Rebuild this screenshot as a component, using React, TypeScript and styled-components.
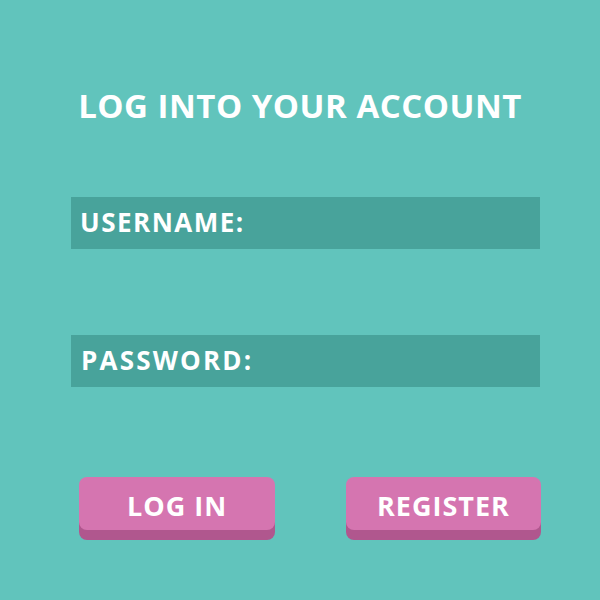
import React from "react";
import styled, { createGlobalStyle } from "styled-components";

const Global = createGlobalStyle`
  html, body { margin: 0; padding: 0; }
  body { background: #61c4bc; font-family: "Open Sans", "Liberation Sans", sans-serif; }
`;

const Page = styled.div`
  width: 600px;
  height: 600px;
  background: #61c4bc;
  display: flex;
  flex-direction: column;
  box-sizing: border-box;
  padding-top: 86px;
`;

const Title = styled.h1`
  margin: 0;
  text-align: center;
  color: #ffffff;
  font-size: 33px;
  font-weight: 700;
  line-height: 40px;
  letter-spacing: 0.5px;
`;

const Fields = styled.div`
  display: flex;
  flex-direction: column;
  gap: 86px;
  margin: 71px 0 0 71px;
`;

const Field = styled.div<{ $pad: number; $ls: number }>`
  width: 469px;
  height: 52px;
  background: #48a39b;
  display: flex;
  align-items: center;
  box-sizing: border-box;
  padding-left: ${(p) => p.$pad}px;
  padding-bottom: 2px;
  color: #ffffff;
  font-size: 26px;
  font-weight: 700;
  letter-spacing: ${(p) => p.$ls}px;
`;

const Buttons = styled.div`
  display: flex;
  gap: 71px;
  margin: 90px 0 0 79px;
`;

const Button = styled.button<{ $w: number }>`
  width: ${(p) => p.$w}px;
  height: 53px;
  border: none;
  border-radius: 8px;
  background: #d575b0;
  box-shadow: 0 10px 0 #b0578e;
  color: #ffffff;
  font-family: inherit;
  font-size: 27px;
  font-weight: 700;
  letter-spacing: 1px;
  padding: 3px 0 0 0;
  display: flex;
  align-items: center;
  justify-content: center;
`;

export default function App() {
  return (
    <>
      <Global />
      <Page>
        <Title>LOG INTO YOUR ACCOUNT</Title>
        <Fields>
          <Field $pad={9} $ls={1.5}>USERNAME:</Field>
          <Field $pad={10} $ls={2.2}>PASSWORD:</Field>
        </Fields>
        <Buttons>
          <Button $w={196}>LOG IN</Button>
          <Button $w={195}>REGISTER</Button>
        </Buttons>
      </Page>
    </>
  );
}
